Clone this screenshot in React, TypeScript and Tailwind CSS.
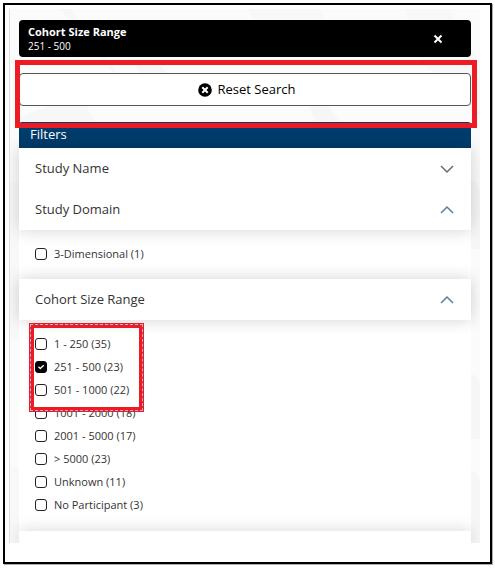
import { useState } from "react";

type Option = { label: string; count: number };

const domainOptions: Option[] = [{ label: "3-Dimensional", count: 1 }];

const sizeOptions: Option[] = [
  { label: "1 - 250", count: 35 },
  { label: "251 - 500", count: 23 },
  { label: "501 - 1000", count: 22 },
  { label: "1001 - 2000", count: 18 },
  { label: "2001 - 5000", count: 17 },
  { label: "> 5000", count: 23 },
  { label: "Unknown", count: 11 },
  { label: "No Participant", count: 3 },
];

function Chevron({ open }: { open: boolean }) {
  return (
    <svg
      viewBox="0 0 14 14"
      className={open ? "size-[14px] text-[#5f7ba3]" : "size-[14px] text-[#6b6b6b]"}
      fill="none"
      stroke="currentColor"
      strokeWidth="1.5"
      aria-hidden="true"
    >
      <path d={open ? "M1 10 L7 4 L13 10" : "M1 4 L7 10 L13 4"} />
    </svg>
  );
}

function SectionHeader({ title, open }: { title: string; open: boolean }) {
  return (
    <button
      type="button"
      aria-expanded={open}
      className="flex h-[41px] w-full items-center justify-between bg-white pr-[17px] pl-4 text-left text-[13px] text-[#333]"
    >
      {title}
      <Chevron open={open} />
    </button>
  );
}

function OptionRow({ option, initial }: { option: Option; initial: boolean }) {
  const [checked, setChecked] = useState(initial);
  return (
    <label className="flex h-[23px] items-center gap-[7px] text-[11px] text-[#333]">
      <span className="mb-[2px] grid size-3">
        <input
          type="checkbox"
          checked={checked}
          onChange={() => setChecked(!checked)}
          className="col-start-1 row-start-1 size-3 appearance-none rounded-[3px] border border-[#222] bg-white checked:border-black checked:bg-black"
        />
        {checked && (
          <svg
            viewBox="0 0 12 12"
            className="pointer-events-none col-start-1 row-start-1 size-3"
            fill="none"
            stroke="white"
            strokeWidth="1.3"
            aria-hidden="true"
          >
            <path d="M3.5 5.8 L5.3 7.5 L8.7 4.3" />
          </svg>
        )}
      </span>
      {option.label} ({option.count})
    </label>
  );
}

function Backdrop() {
  return (
    <svg
      className="absolute inset-0 size-full"
      viewBox="0 0 471 534"
      preserveAspectRatio="none"
      aria-hidden="true"
    >
      <path d="M50 0 H62 L76 30 L130 95 L90 40 Z" fill="#f7f7f7" />
      <path d="M120 50 H145 L157 64 H130 Z" fill="#f6f6f6" />
      <path d="M238 0 H310 L323 20 H250 Z" fill="#f8f8f8" />
      <path d="M300 96 H318 L330 112 H305 Z" fill="#f6f6f6" />
      <path d="M395 0 H440 L471 55 V110 L410 50 Z" fill="#f8f8f8" />
      <path d="M0 112 L70 85 L85 112 Z" fill="#f7f7f7" />
      <path d="M455 170 L466 172 L471 180 V240 H455 Z" fill="#f6f6f6" />
      <path d="M455 364 L466 366 L471 374 V430 H455 Z" fill="#f6f6f6" />
      <path d="M455 461 L466 463 L471 471 V534 H455 Z" fill="#f6f6f6" />
      <path d="M0 173 H10 V330 H0 Z M0 458 H10 V534 H0 Z" fill="#f8f8f8" />
    </svg>
  );
}

export default function App() {
  return (
    <div className="bg-white p-[3px] font-['Open_Sans','Noto_Sans',sans-serif]">
      <div className="border-2 border-black bg-white px-1 pt-1 pb-[19px] shadow-[1px_1px_0_#aaa]">
        <main className="relative mr-[6px] overflow-hidden border-l border-[#ddd] bg-[#fbfbfb] pt-[11px] pr-[9px] pl-[9px]">
          <Backdrop />
          <div className="relative">
            <div className="flex h-[37px] items-center justify-between rounded-[4px] bg-black pr-6 pl-[9px] text-white">
              <div>
                <div className="text-[11px] leading-[14px] font-bold">Cohort Size Range</div>
                <div className="text-[10px] leading-[14px]">251 - 500</div>
              </div>
              <button type="button" aria-label="Remove Cohort Size Range" className="p-1">
                <svg viewBox="0 0 10 10" className="size-[10px]" stroke="white" strokeWidth="2" aria-hidden="true">
                  <path d="M1.5 1.5 L8.5 8.5 M8.5 1.5 L1.5 8.5" />
                </svg>
              </button>
            </div>

            <div className="relative py-4">
              <button
                type="button"
                className="flex h-[33px] w-full items-center justify-center gap-[6px] rounded-[4px] border border-[#555] bg-white pl-[3px] text-[13px] text-black"
              >
                <svg viewBox="0 0 14 14" className="size-[14px]" aria-hidden="true">
                  <circle cx="7" cy="7" r="6.8" fill="black" />
                  <path d="M4.3 4.3 L9.7 9.7 M9.7 4.3 L4.3 9.7" stroke="white" strokeWidth="2" />
                </svg>
                Reset Search
              </button>
              <div className="pointer-events-none absolute top-[3px] -right-[6px] -bottom-[6px] -left-1 z-20 border-[5px] border-[#ed1c24]" />
            </div>

            <h2 className="flex h-[26px] items-center rounded-t-[3px] bg-[#003c6c] pl-[11px] text-[13px] text-white">
              Filters
            </h2>

            <div className="bg-white">
              <div className="relative z-10 shadow-[0_0_16px_rgba(0,0,0,0.18)]">
                <SectionHeader title="Study Name" open={false} />
                <SectionHeader title="Study Domain" open />
              </div>
              <div className="px-4 pt-[13px] pb-[13px]">
                {domainOptions.map((o) => (
                  <OptionRow key={o.label} option={o} initial={false} />
                ))}
              </div>

              <div className="relative z-10 shadow-[0_0_16px_rgba(0,0,0,0.18)]">
                <SectionHeader title="Cohort Size Range" open />
              </div>
              <div className="relative px-4 pt-[13px] pb-[14px]">
                {sizeOptions.map((o) => (
                  <OptionRow key={o.label} option={o} initial={o.label === "251 - 500"} />
                ))}
                <div className="pointer-events-none absolute top-[3px] left-[10px] z-20 h-[89px] w-[115px] border-[5px] border-[#ed1c24]">
                  <div className="absolute -inset-1 border border-[#b0365c]" />
                  <div className="absolute -inset-1 border border-dashed border-[#d9a9bd]" />
                </div>
              </div>

              <div className="relative z-10 h-3 bg-white shadow-[0_0_16px_rgba(0,0,0,0.18)]" />
            </div>
          </div>
        </main>
      </div>
    </div>
  );
}
